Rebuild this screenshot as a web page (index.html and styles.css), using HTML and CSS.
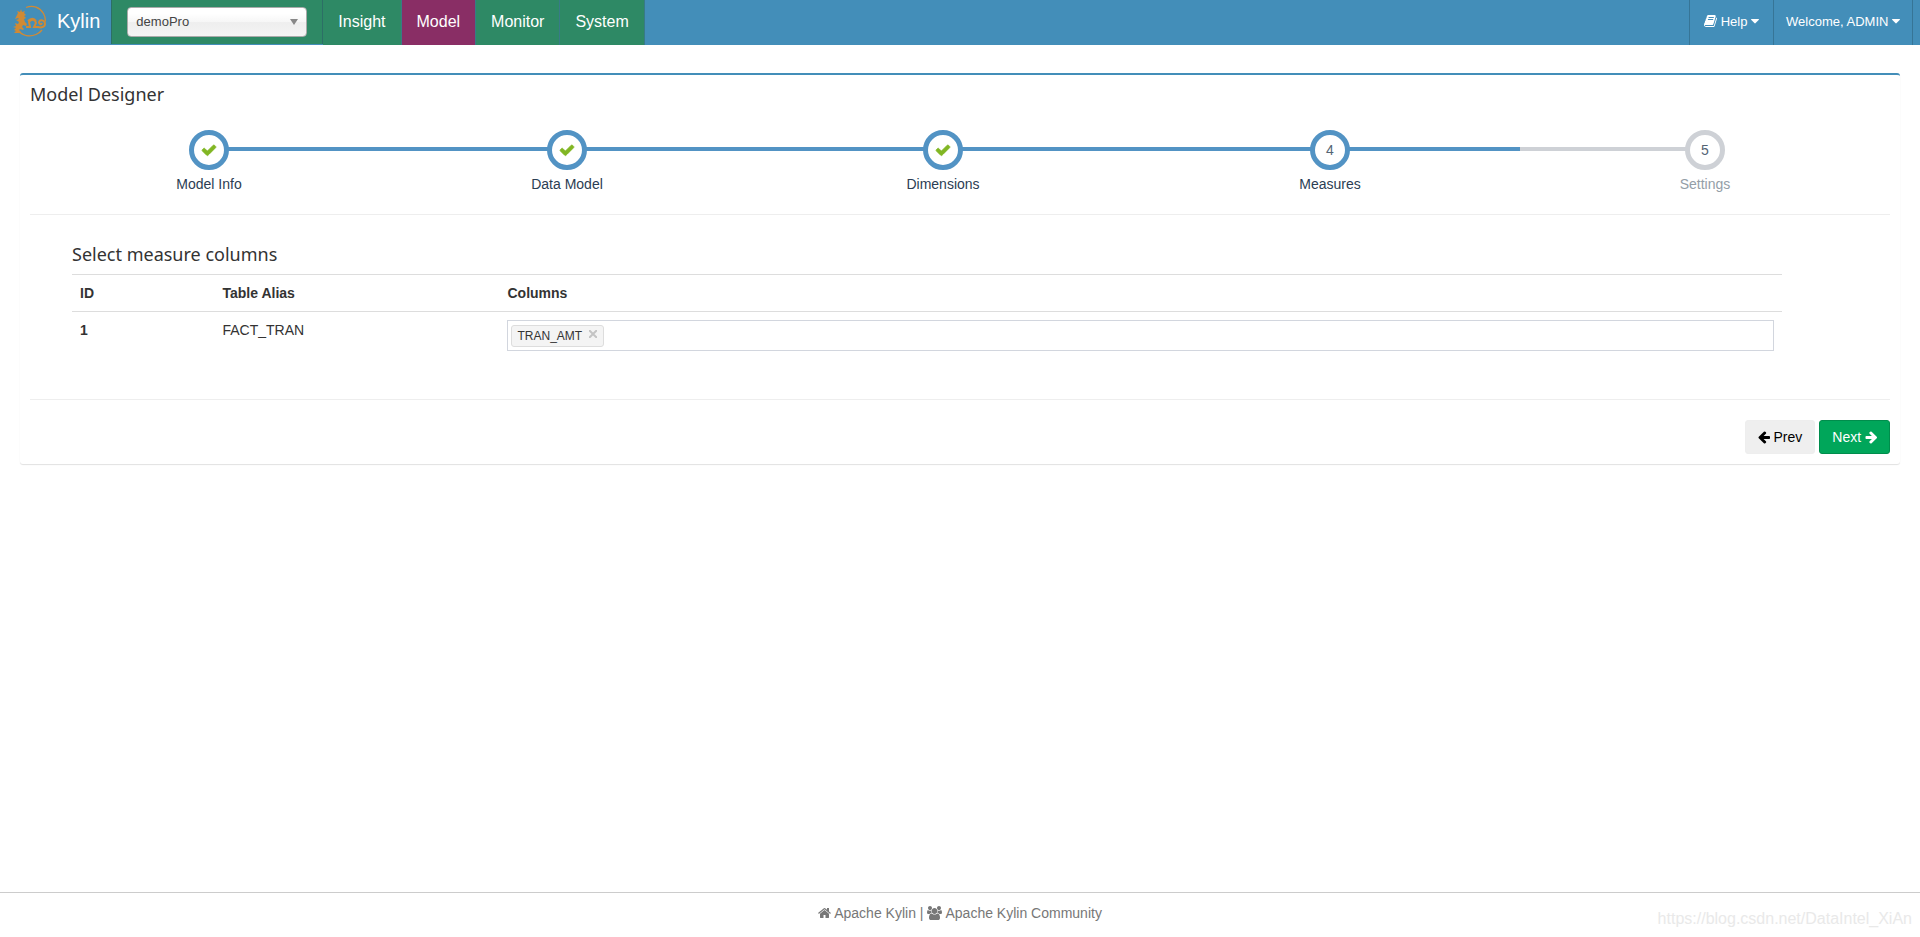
FILE: index.html
```html
<!DOCTYPE html>
<html lang="en">

<head>
  <meta charset="UTF-8">
  <meta name="viewport" content="width=device-width, initial-scale=1.0">
  <title>Kylin - Model Designer</title>
  <link rel="stylesheet" href="styles.css">
</head>

<body>
  <header class="navbar">
    <a class="brand" href="#">
      <svg class="logo" viewBox="0 0 34 32" fill="none" stroke="#d08a35">
        <path d="M13 2.500c7-3 14 0 17.500 6 1.500 2.500 2 5 2 8M5 25.500c5 5.500 12 6.500 18 4 2.500-1 4.500-2.500 6-4.500" stroke-width="1.300"/>
        <path d="M4 10l1-2-1-2 3 1 1-3 1 3 3-1-1 2 2 2-2 1 2 2-2 1 1 3 2 2-1 2-3-1-1 2 2 2-1 1-3-1-1 1 2 2-1 1H1l2-2-2-1 2-2-3-1 3-1-1-3 3 1 1-2-3-2 3-1-1-1-3 1z" fill="#d08a35" stroke="none"/>
        <path d="M13 22h4l-1-5c2-3 6-3 7 1l-2 4h4c3 1 7 0 7-3 0-4-5-5-6-2 0 2 2 3 3 1M15 16c3-3 6-3 8 0" stroke-width="2"/>
      </svg>
      <span>Kylin</span>
    </a>
    <div class="project">
      <select aria-label="Project">
        <option>demoPro</option>
      </select>
    </div>
    <nav class="menu">
      <a href="#">Insight</a>
      <a href="#" class="active">Model</a>
      <a href="#">Monitor</a>
      <a href="#">System</a>
    </nav>
    <div class="user-menu">
      <a href="#"><svg class="icon book" viewBox="64 0 1664 1792"><path d="M1703 478q40 57 18 129l-275 906q-19 64-76.500 107.500t-122.500 43.500h-923q-77 0-148.500-53.500t-99.500-131.500q-24-67-2-127 0-4 3-27t4-37q1-8-3-21.500t-3-19.500q2-11 8-21t16.500-23.500 16.500-23.500q23-38 45-91.500t30-91.500q3-10 .5-30t-.5-28q3-11 17-28t17-23q21-36 42-92t25-90q1-9-2.500-32t.5-28q4-13 22-30.500t22-22.500q19-26 42.500-84.500t27.500-96.500q1-8-3-25.500t-2-26.500q2-8 9-18t18-23 17-21q8-12 16.500-30.500t15-35 16-36 19.500-32 26.500-23.500 36-11.500 47.500 5.500l-1 3q38-9 51-9h761q74 0 114 56t18 130l-274 906q-36 119-71.500 153.500t-128.500 34.500h-869q-27 0-38 15-11 16-1 43 24 70 144 70h923q29 0 56-15.500t35-41.500l300-987q7-22 5-57 38 15 59 43zm-1064 2q-4 13 2 22.500t20 9.500h608q13 0 25.500-9.500t16.500-22.500l21-64q4-13-2-22.500t-20-9.500h-608q-13 0-25.500 9.500t-16.500 22.500zm-83 256q-4 13 2 22.500t20 9.500h608q13 0 25.500-9.500t16.500-22.500l21-64q4-13-2-22.500t-20-9.500h-608q-13 0-25.500 9.500t-16.500 22.500z"/></svg> Help <svg class="icon caret" viewBox="384 0 1024 1792"><path d="M1408 704q0 26-19 45l-448 448q-19 19-45 19t-45-19l-448-448q-19-19-19-45t19-45 45-19h896q26 0 45 19t19 45z"/></svg></a>
      <a href="#">Welcome, ADMIN <svg class="icon caret" viewBox="384 0 1024 1792"><path d="M1408 704q0 26-19 45l-448 448q-19 19-45 19t-45-19l-448-448q-19-19-19-45t19-45 45-19h896q26 0 45 19t19 45z"/></svg></a>
    </div>
  </header>

  <main>
    <section class="box">
      <h3>Model Designer</h3>

      <ol class="steps">
        <li class="complete">
          <span class="step"><svg class="icon check" viewBox="0 0 1792 1792"><path d="M1671 566q0 40-28 68l-724 724-136 136q-28 28-68 28t-68-28l-136-136-362-362q-28-28-28-68t28-68l136-136q28-28 68-28t68 28l294 295 656-657q28-28 68-28t68 28l136 136q28 28 28 68z"/></svg></span>
          <span class="title">Model Info</span>
        </li>
        <li class="complete">
          <span class="step"><svg class="icon check" viewBox="0 0 1792 1792"><path d="M1671 566q0 40-28 68l-724 724-136 136q-28 28-68 28t-68-28l-136-136-362-362q-28-28-28-68t28-68l136-136q28-28 68-28t68 28l294 295 656-657q28-28 68-28t68 28l136 136q28 28 28 68z"/></svg></span>
          <span class="title">Data Model</span>
        </li>
        <li class="complete">
          <span class="step"><svg class="icon check" viewBox="0 0 1792 1792"><path d="M1671 566q0 40-28 68l-724 724-136 136q-28 28-68 28t-68-28l-136-136-362-362q-28-28-28-68t28-68l136-136q28-28 68-28t68 28l294 295 656-657q28-28 68-28t68 28l136 136q28 28 28 68z"/></svg></span>
          <span class="title">Dimensions</span>
        </li>
        <li class="active">
          <span class="step">4</span>
          <span class="title">Measures</span>
        </li>
        <li>
          <span class="step">5</span>
          <span class="title">Settings</span>
        </li>
      </ol>

      <div class="step-content">
        <h3>Select measure columns</h3>
        <table>
          <thead>
            <tr>
              <th class="col-id">ID</th>
              <th class="col-alias">Table Alias</th>
              <th>Columns</th>
            </tr>
          </thead>
          <tbody>
            <tr>
              <th>1</th>
              <td>FACT_TRAN</td>
              <td>
                <div class="multi-select">
                  <span class="tag">TRAN_AMT
                    <button type="button" aria-label="Remove TRAN_AMT"><svg viewBox="0 0 8 8"><path d="M0 0l8 8M8 0l-8 8"/></svg></button>
                  </span>
                  <input type="text" aria-label="Columns">
                </div>
              </td>
            </tr>
          </tbody>
        </table>
      </div>

      <div class="actions">
        <button type="button" class="btn btn-prev"><svg class="icon arrow" viewBox="128 0 1536 1792"><path d="M1664 896v128q0 53-32.500 90.500t-84.500 37.500h-704l293 294q38 36 38 90t-38 90l-75 76q-37 37-90 37-52 0-91-37l-651-652q-37-37-37-90 0-52 37-91l651-650q38-38 91-38 52 0 90 38l75 74q38 38 38 91t-38 91l-293 293h704q52 0 84.500 37.500t32.500 90.500z"/></svg> Prev</button>
        <button type="button" class="btn btn-next">Next <svg class="icon arrow" viewBox="64 0 1536 1792"><path d="M1600 960q0 54-37 91l-651 651q-39 37-91 37-51 0-90-37l-75-75q-38-38-38-91t38-91l293-293h-704q-52 0-84.500-37.500t-32.500-90.500v-128q0-53 32.500-90.500t84.500-37.500h704l-293-294q-38-36-38-90t38-90l75-75q38-38 90-38 53 0 91 38l651 651q37 35 37 90z"/></svg></button>
      </div>
    </section>
  </main>

  <footer>
    <a href="#"><svg class="icon home" viewBox="64 0 1664 1792"><path d="M1472 992v480q0 26-19 45t-45 19h-384v-384h-256v384h-384q-26 0-45-19t-19-45v-480q0-1 .5-3t.5-3l575-474 575 474q1 2 1 6zm223-69l-62 74q-8 9-21 11h-3q-13 0-21-7l-692-577-692 577q-12 8-24 7-13-2-21-11l-62-74q-8-10-7-23.500t11-21.500l719-599q32-26 76-26t76 26l244 204v-195q0-14 9-23t23-9h192q14 0 23 9t9 23v408l219 182q10 8 11 21.500t-7 23.500z"/></svg> Apache Kylin</a> |
    <a href="#"><svg class="icon users" viewBox="-64 0 1920 1792"><path d="M529 896q-162 5-265 128h-134q-82 0-138-40.500t-56-118.500q0-353 124-353 6 0 43.500 21t97.500 42.500 119 21.500q67 0 133-23-5 37-5 66 0 139 81 256zm1071 637q0 120-73 189.500t-194 69.500h-874q-121 0-194-69.500t-73-189.500q0-53 3.500-103.500t14-109 26.500-108.500 43-97.500 62-81 85.500-53.500 111.500-20q10 0 43 21.500t73 48 107 48 135 21.500 135-21.500 107-48 73-48 43-21.500q61 0 111.500 20t85.500 53.500 62 81 43 97.500 26.500 108.500 14 109 3.500 103.500zm-1024-1277q0 106-75 181t-181 75-181-75-75-181 75-181 181-75 181 75 75 181zm704 384q0 159-112.500 271.500t-271.500 112.500-271.500-112.500-112.500-271.500 112.500-271.500 271.500-112.500 271.500 112.500 112.500 271.500zm576 225q0 78-56 118.500t-138 40.500h-134q-103-123-265-128 81-117 81-256 0-29-5-66 66 23 133 23 59 0 119-21.500t97.500-42.500 43.500-21q124 0 124 353zm-128-609q0 106-75 181t-181 75-181-75-75-181 75-181 181-75 181 75 75 181z"/></svg> Apache Kylin Community</a>
  </footer>
  <span class="watermark">https://blog.csdn.net/DataIntel_XiAn</span>
</body>
</html>
```
FILE: styles.css
```css
:root {
  --blue: #438eb9;
  --step-blue: #5293c4;
  --step-grey: #ced1d6;
  --green: #2e8965;
  --text-color: #333;
}
* { box-sizing: border-box; }
body {
  margin: 0;
  min-height: 100vh;
  display: flex;
  flex-direction: column;
  background: #fff;
  color: var(--text-color);
  font: 14px/20px "Liberation Sans", Arial, sans-serif;
}
a { color: inherit; text-decoration: none; }
h3 {
  margin: 0;
  font: 400 18px/20px "Noto Sans", "Open Sans", sans-serif;
}
.icon {
  height: 14px;
  fill: currentColor;
  vertical-align: -2px;
}

/* top bar */
.navbar {
  display: flex;
  height: 45px;
  background: var(--blue);
  color: #fff;
}
.brand {
  display: flex;
  align-items: center;
  gap: 10px;
  padding: 0 11px 3px 13px;
  font-size: 20px;
  line-height: 24px;
}
.logo { width: 34px; height: 32px; }
.project {
  position: relative;
  height: 44px;
  padding: 7px 15px;
  background: var(--green);
  border: solid #2c6f66;
  border-width: 0 1px;
}
.project select {
  display: block;
  appearance: none;
  width: 180px;
  height: 30px;
  padding: 0 8px;
  border: 1px solid #aaa;
  border-radius: 4px;
  background: linear-gradient(#fff 20%, #f6f6f6 50%, #eee 52%, #f4f4f4);
  color: #444;
  font: 13px/20px "Liberation Sans", Arial, sans-serif;
}
.project::after {
  content: "";
  position: absolute;
  right: 24px; top: 19px;
  border: solid transparent;
  border-width: 6px 4px 0;
  border-top-color: #888;
}
.menu { display: flex; }
.menu a {
  padding: 12px 15px 0;
  background: var(--green);
  border-right: 1px solid #387a87;
  font-size: 16px;
}
.menu .active { background: #892e65; }
.user-menu {
  display: flex;
  margin-left: auto;
  padding-right: 7px;
}
.user-menu a {
  padding: 12px 14px 0;
  border-left: 1px solid #367597;
  font-size: 13px;
}
.user-menu a:last-child {
  padding: 12px 12px 0;
  border-right: 1px solid #367597;
}
.book { width: 13px; height: 14px; }
.caret { width: 8px; height: 14px; }

/* designer box */
main {
  flex: 1;
  padding: 28px 20px;
}
.box {
  padding: 9px 10px 10px;
  border-top: 2px solid var(--blue);
  border-radius: 3px;
  box-shadow: 0 1px 1px rgba(0,0,0,.12);
}
.steps {
  display: grid;
  grid-template-columns: 179fr 179fr 197fr 190fr 185fr;
  margin: 26px 0 0;
  padding: 0 0 20px;
  border-bottom: 1px solid #eee;
  list-style: none;
}
.steps li {
  position: relative;
  text-align: center;
  color: #949ea7;
}
/* connecting line behind the circles */
.steps li::before {
  content: "";
  position: absolute;
  top: 17px; left: 0; right: 0;
  height: 4px;
  background: var(--step-grey);
}
.steps li:first-child::before { left: 50%; }
.steps li:last-child::before { right: 50%; }
.steps .complete::before, .steps .active::before { background: var(--step-blue); }
.steps .complete, .steps .active { color: #2b3d53; }
.step {
  position: relative;
  display: block;
  width: 40px; height: 40px;
  margin: 0 auto 4px;
  border: 5px solid var(--step-grey);
  border-radius: 50%;
  background: #fff;
  color: #546474;
  line-height: 30px;
}
.complete .step, .active .step { border-color: var(--step-blue); }
.check {
  width: 16px; height: 16px;
  vertical-align: -3px;
  fill: #81b623;
  stroke: #81b623;
  stroke-width: 90;
}
.title { display: block; }

.step-content {
  padding: 29px 108px 40px 42px;
  border-bottom: 1px solid #eee;
}
table {
  width: 100%;
  margin-top: 10px;
  border-collapse: collapse;
  table-layout: fixed;
}
th, td {
  padding: 8px;
  border-top: 1px solid #ddd;
  text-align: left;
  vertical-align: top;
}
.col-id { width: 8.333%; }
.col-alias { width: 16.667%; }
.multi-select {
  display: flex;
  padding: 4px 3px 3px;
  border: 1px solid #d2d6de;
}
.tag {
  display: flex;
  gap: 6px;
  padding: 0 5px;
  border: 1px solid #ddd;
  border-radius: 3px;
  background: #f4f4f4;
  font-size: 12px;
}
.tag button {
  width: 10px; height: 16px;
  padding: 0;
  border: 0;
  background: none;
  line-height: 10px;
  cursor: pointer;
}
.tag svg {
  width: 8px; height: 8px;
  stroke: #c4c4c4;
  stroke-width: 2;
}
.multi-select input {
  flex: 1;
  min-width: 0;
  padding: 0;
  border: 0;
  outline: none;
  background: none;
}

.actions {
  display: flex;
  justify-content: flex-end;
  gap: 4px;
  padding-top: 20px;
}
.btn {
  padding: 6px 12px;
  border: 1px solid #eee;
  border-radius: 3px;
  background: #efefef;
  color: #000;
  font: 14px/20px "Liberation Sans", Arial, sans-serif;
  cursor: pointer;
}
.btn-next {
  border-color: #008d4c;
  background: #00a65a;
  color: #fff;
}
.arrow { width: 12px; }

footer {
  height: 45px;
  padding-top: 10px;
  border-top: 1px solid #ccc;
  text-align: center;
  color: #777;
}
.home { width: 13px; }
.users { width: 15px; }
.watermark {
  position: absolute;
  right: 8px; bottom: 8px;
  color: #e9e9e9;
  font-size: 16px;
}
```
